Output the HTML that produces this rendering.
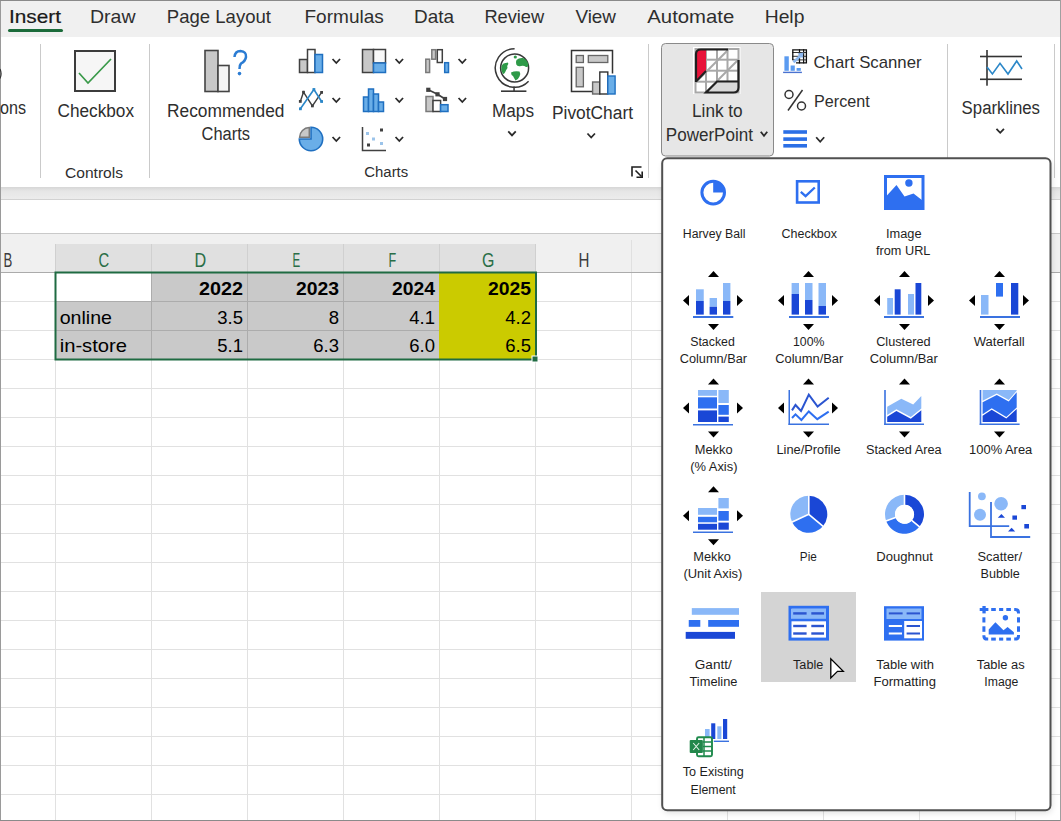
<!DOCTYPE html><html><head><meta charset="utf-8"><style>html,body{margin:0;padding:0;width:1061px;height:821px;overflow:hidden;background:#fff}svg{display:block}text{font-family:"Liberation Sans",sans-serif}</style></head><body><svg width="1061" height="821" viewBox="0 0 1061 821"><rect x="0" y="0" width="1061" height="821" fill="#ffffff"/>
<rect x="0" y="0" width="1061" height="37" fill="#f0f0f0"/>
<rect x="0" y="37" width="1061" height="150" fill="#ffffff"/>
<defs><linearGradient id="rs" x1="0" y1="0" x2="0" y2="1"><stop offset="0" stop-color="#d6d6d6"/><stop offset="0.35" stop-color="#e6e6e6"/><stop offset="1" stop-color="#ececec"/></linearGradient><filter id="psh" x="-10%" y="-10%" width="120%" height="120%"><feGaussianBlur stdDeviation="3"/></filter></defs>
<rect x="0" y="187" width="1061" height="12" fill="url(#rs)"/>
<rect x="0" y="199" width="1061" height="1" fill="#d2d2d2"/>
<rect x="0" y="200" width="1061" height="33" fill="#ffffff"/>
<rect x="0" y="233" width="1061" height="1" fill="#c9c9c9"/>
<rect x="0" y="234" width="1061" height="38" fill="#f0f0f0"/>
<rect x="55" y="244" width="481" height="28" fill="#e0e0e0"/>
<rect x="55" y="244" width="1" height="28" fill="#d0d0d0"/>
<rect x="151" y="244" width="1" height="28" fill="#d0d0d0"/>
<rect x="247" y="244" width="1" height="28" fill="#d0d0d0"/>
<rect x="343" y="244" width="1" height="28" fill="#d0d0d0"/>
<rect x="439" y="244" width="1" height="28" fill="#d0d0d0"/>
<rect x="535" y="244" width="1" height="28" fill="#d0d0d0"/>
<rect x="631" y="240" width="1" height="32" fill="#e0e0e0"/>
<rect x="727" y="240" width="1" height="32" fill="#e0e0e0"/>
<rect x="823" y="240" width="1" height="32" fill="#e0e0e0"/>
<rect x="919" y="240" width="1" height="32" fill="#e0e0e0"/>
<rect x="1015" y="240" width="1" height="32" fill="#e0e0e0"/>
<rect x="0" y="272" width="1061" height="1" fill="#ababab"/>
<rect x="0" y="301" width="1061" height="1" fill="#e1e1e1"/>
<rect x="0" y="330" width="1061" height="1" fill="#e1e1e1"/>
<rect x="0" y="359" width="1061" height="1" fill="#e1e1e1"/>
<rect x="0" y="388" width="1061" height="1" fill="#e1e1e1"/>
<rect x="0" y="417" width="1061" height="1" fill="#e1e1e1"/>
<rect x="0" y="446" width="1061" height="1" fill="#e1e1e1"/>
<rect x="0" y="475" width="1061" height="1" fill="#e1e1e1"/>
<rect x="0" y="504" width="1061" height="1" fill="#e1e1e1"/>
<rect x="0" y="533" width="1061" height="1" fill="#e1e1e1"/>
<rect x="0" y="562" width="1061" height="1" fill="#e1e1e1"/>
<rect x="0" y="591" width="1061" height="1" fill="#e1e1e1"/>
<rect x="0" y="620" width="1061" height="1" fill="#e1e1e1"/>
<rect x="0" y="649" width="1061" height="1" fill="#e1e1e1"/>
<rect x="0" y="678" width="1061" height="1" fill="#e1e1e1"/>
<rect x="0" y="707" width="1061" height="1" fill="#e1e1e1"/>
<rect x="0" y="736" width="1061" height="1" fill="#e1e1e1"/>
<rect x="0" y="765" width="1061" height="1" fill="#e1e1e1"/>
<rect x="0" y="794" width="1061" height="1" fill="#e1e1e1"/>
<rect x="55" y="273" width="1" height="548" fill="#e1e1e1"/>
<rect x="151" y="273" width="1" height="548" fill="#e1e1e1"/>
<rect x="247" y="273" width="1" height="548" fill="#e1e1e1"/>
<rect x="343" y="273" width="1" height="548" fill="#e1e1e1"/>
<rect x="439" y="273" width="1" height="548" fill="#e1e1e1"/>
<rect x="535" y="273" width="1" height="548" fill="#e1e1e1"/>
<rect x="631" y="273" width="1" height="548" fill="#e1e1e1"/>
<rect x="727" y="273" width="1" height="548" fill="#e1e1e1"/>
<rect x="823" y="273" width="1" height="548" fill="#e1e1e1"/>
<rect x="919" y="273" width="1" height="548" fill="#e1e1e1"/>
<rect x="1015" y="273" width="1" height="548" fill="#e1e1e1"/>
<rect x="151" y="273" width="288" height="28" fill="#c9c9c9"/>
<rect x="56" y="302" width="383" height="57" fill="#c9c9c9"/>
<rect x="439" y="273" width="97" height="86" fill="#cbcb00"/>
<rect x="151" y="273" width="1" height="86" fill="#acacac"/>
<rect x="247" y="273" width="1" height="86" fill="#acacac"/>
<rect x="343" y="273" width="1" height="86" fill="#acacac"/>
<rect x="56" y="301" width="383" height="1" fill="#acacac"/>
<rect x="56" y="330" width="383" height="1" fill="#acacac"/>
<rect x="56" y="273" width="95" height="28" fill="#ffffff"/>
<rect x="55.5" y="272.5" width="480.5" height="87" fill="none" stroke="#1f6b42" stroke-width="2"/>
<rect x="532" y="356" width="6" height="6" fill="#1f6b42" stroke="#ffffff" stroke-width="1"/>
<text x="3.60" y="266.80" font-size="20" fill="#3c3c3c" font-weight="normal" textLength="8.80" lengthAdjust="spacingAndGlyphs" >B</text>
<text x="98.50" y="266.80" font-size="20" fill="#2a6e47" font-weight="normal" textLength="10.70" lengthAdjust="spacingAndGlyphs" >C</text>
<text x="194.60" y="266.80" font-size="20" fill="#2a6e47" font-weight="normal" textLength="11.70" lengthAdjust="spacingAndGlyphs" >D</text>
<text x="292.40" y="266.80" font-size="20" fill="#2a6e47" font-weight="normal" textLength="7.70" lengthAdjust="spacingAndGlyphs" >E</text>
<text x="388.60" y="266.80" font-size="20" fill="#2a6e47" font-weight="normal" textLength="7.70" lengthAdjust="spacingAndGlyphs" >F</text>
<text x="481.90" y="266.80" font-size="20" fill="#2a6e47" font-weight="normal" textLength="12.40" lengthAdjust="spacingAndGlyphs" >G</text>
<text x="578.60" y="266.80" font-size="20" fill="#3c3c3c" font-weight="normal" textLength="10.90" lengthAdjust="spacingAndGlyphs" >H</text>
<text x="199.00" y="294.70" font-size="18.5" fill="#000" font-weight="bold" textLength="44.00" lengthAdjust="spacingAndGlyphs" >2022</text>
<text x="296.00" y="294.70" font-size="18.5" fill="#000" font-weight="bold" textLength="43.00" lengthAdjust="spacingAndGlyphs" >2023</text>
<text x="392.00" y="294.70" font-size="18.5" fill="#000" font-weight="bold" textLength="43.00" lengthAdjust="spacingAndGlyphs" >2024</text>
<text x="488.00" y="294.70" font-size="18.5" fill="#000" font-weight="bold" textLength="43.00" lengthAdjust="spacingAndGlyphs" >2025</text>
<text x="59.70" y="323.80" font-size="18.5" fill="#000" font-weight="normal" textLength="52.30" lengthAdjust="spacingAndGlyphs" >online</text>
<text x="59.70" y="352.40" font-size="18.5" fill="#000" font-weight="normal" textLength="67.30" lengthAdjust="spacingAndGlyphs" >in-store</text>
<text x="243" y="323.8" font-size="18.5" fill="#000" text-anchor="end">3.5</text>
<text x="243" y="352.4" font-size="18.5" fill="#000" text-anchor="end">5.1</text>
<text x="339" y="323.8" font-size="18.5" fill="#000" text-anchor="end">8</text>
<text x="339" y="352.4" font-size="18.5" fill="#000" text-anchor="end">6.3</text>
<text x="435" y="323.8" font-size="18.5" fill="#000" text-anchor="end">4.1</text>
<text x="435" y="352.4" font-size="18.5" fill="#000" text-anchor="end">6.0</text>
<text x="531" y="323.8" font-size="18.5" fill="#000" text-anchor="end">4.2</text>
<text x="531" y="352.4" font-size="18.5" fill="#000" text-anchor="end">6.5</text>
<rect x="0" y="0" width="1" height="821" fill="#9a9a9a"/>
<rect x="0" y="0" width="1061" height="1" fill="#8a8a8a"/>
<rect x="0" y="820" width="1061" height="1" fill="#8a8a8a"/>
<rect x="1060" y="0" width="1" height="821" fill="#a0a0a0"/>
<text x="9.00" y="23.00" font-size="19" fill="#1a1a1a" font-weight="normal" textLength="52.00" lengthAdjust="spacingAndGlyphs" stroke="#1a1a1a" stroke-width="0.2">Insert</text>
<text x="90.00" y="23.00" font-size="19" fill="#2e2e2e" font-weight="normal" textLength="45.50" lengthAdjust="spacingAndGlyphs" >Draw</text>
<text x="166.80" y="23.00" font-size="19" fill="#2e2e2e" font-weight="normal" textLength="104.20" lengthAdjust="spacingAndGlyphs" >Page Layout</text>
<text x="304.50" y="23.00" font-size="19" fill="#2e2e2e" font-weight="normal" textLength="79.30" lengthAdjust="spacingAndGlyphs" >Formulas</text>
<text x="414.00" y="23.00" font-size="19" fill="#2e2e2e" font-weight="normal" textLength="40.00" lengthAdjust="spacingAndGlyphs" >Data</text>
<text x="484.40" y="23.00" font-size="19" fill="#2e2e2e" font-weight="normal" textLength="59.80" lengthAdjust="spacingAndGlyphs" >Review</text>
<text x="575.40" y="23.00" font-size="19" fill="#2e2e2e" font-weight="normal" textLength="40.60" lengthAdjust="spacingAndGlyphs" >View</text>
<text x="647.30" y="23.00" font-size="19" fill="#2e2e2e" font-weight="normal" textLength="86.90" lengthAdjust="spacingAndGlyphs" >Automate</text>
<text x="764.70" y="23.00" font-size="19" fill="#2e2e2e" font-weight="normal" textLength="39.70" lengthAdjust="spacingAndGlyphs" >Help</text>
<rect x="8" y="29" width="55" height="3" rx="1.5" fill="#1b6b3a"/>
<rect x="40" y="44" width="1" height="134" fill="#cacaca"/>
<rect x="149" y="44" width="1" height="134" fill="#cacaca"/>
<rect x="648" y="44" width="1" height="134" fill="#cacaca"/>
<rect x="947" y="44" width="1" height="134" fill="#cacaca"/>
<rect x="1054" y="44" width="1" height="134" fill="#cacaca"/>
<text x="0.00" y="113.60" font-size="18" fill="#2e2e2e" font-weight="normal" textLength="26.00" lengthAdjust="spacingAndGlyphs" >ons</text>
<path d="M0,69 Q2.2,73.7 0,78.4" fill="none" stroke="#333" stroke-width="1.2"/>
<rect x="75" y="51" width="40" height="40" fill="#f6f6f6" stroke="#3c3c3c" stroke-width="2"/>
<polyline points="79,73 88,83 111,59" fill="none" stroke="#3a9a4a" stroke-width="1.7"/>
<text x="57.50" y="117.00" font-size="18" fill="#2e2e2e" font-weight="normal" textLength="76.50" lengthAdjust="spacingAndGlyphs" >Checkbox</text>
<text x="65.00" y="177.50" font-size="15.5" fill="#2e2e2e" font-weight="normal" textLength="58.00" lengthAdjust="spacingAndGlyphs" >Controls</text>
<rect x="205" y="50.5" width="13" height="41" fill="#c8c8c8" stroke="#444" stroke-width="1.6"/>
<rect x="218" y="65.5" width="11" height="26" fill="#f4f4f4" stroke="#444" stroke-width="1.6"/>
<path d="M234.5,57 Q235,51 240.5,51 Q246.5,51.5 246,57 Q245.5,61 241,63.5 Q239.5,65 239.5,69" fill="none" stroke="#2b7cd3" stroke-width="2.5"/>
<circle cx="239.5" cy="73.6" r="1.8" fill="#2b7cd3"/>
<text x="167.00" y="116.50" font-size="18" fill="#2e2e2e" font-weight="normal" textLength="117.50" lengthAdjust="spacingAndGlyphs" >Recommended</text>
<text x="201.60" y="140.00" font-size="18" fill="#2e2e2e" font-weight="normal" textLength="48.40" lengthAdjust="spacingAndGlyphs" >Charts</text>
<rect x="299.5" y="59.5" width="8" height="13" fill="#c8c8c8" stroke="#404040" stroke-width="1.5"/>
<rect x="307.5" y="49.5" width="7.5" height="23" fill="#fff" stroke="#404040" stroke-width="1.5"/>
<rect x="315" y="54.5" width="7.5" height="18" fill="#6aaee8" stroke="#1f6fc0" stroke-width="1.5"/>
<polyline points="332.55,59.00 336.30,63.00 340.05,59.00" fill="none" stroke="#2a2a2a" stroke-width="1.8"/>
<rect x="362.5" y="49.5" width="11" height="23" fill="#c8c8c8" stroke="#404040" stroke-width="1.5"/>
<rect x="373.5" y="49.5" width="12" height="13.5" fill="#f8f8f8" stroke="#404040" stroke-width="1.5"/>
<rect x="373.5" y="63" width="12" height="9.5" fill="#6aaee8" stroke="#1f6fc0" stroke-width="1.5"/>
<polyline points="395.55,59.00 399.30,63.00 403.05,59.00" fill="none" stroke="#2a2a2a" stroke-width="1.8"/>
<rect x="425.8" y="59.2" width="3.8" height="13.3" fill="#c8c8c8" stroke="#7a7a7a" stroke-width="1.5"/>
<rect x="431.8" y="49.7" width="3.8" height="9.5" fill="#c8c8c8" stroke="#7a7a7a" stroke-width="1.5"/>
<rect x="437.3" y="49.7" width="5" height="12.8" fill="#fff" stroke="#404040" stroke-width="1.5"/>
<rect x="444.7" y="62.7" width="3.8" height="9.8" fill="#6aaee8" stroke="#1f6fc0" stroke-width="1.5"/>
<polyline points="458.55,59.00 462.30,63.00 466.05,59.00" fill="none" stroke="#2a2a2a" stroke-width="1.8"/>
<polyline points="300.3,101.4 303.5,92.2 312.4,105.9 321.6,92.4" fill="none" stroke="#404040" stroke-width="1.4"/>
<rect x="298.90000000000003" y="100.0" width="2.8" height="2.8" fill="#404040"/>
<rect x="302.1" y="90.8" width="2.8" height="2.8" fill="#404040"/>
<rect x="311.0" y="104.5" width="2.8" height="2.8" fill="#404040"/>
<rect x="320.20000000000005" y="91.0" width="2.8" height="2.8" fill="#404040"/>
<polyline points="300.4,108.8 313.9,89.5 321.6,101.5" fill="none" stroke="#2b87c8" stroke-width="1.6"/>
<rect x="299.0" y="107.39999999999999" width="2.8" height="2.8" fill="#2b87c8"/>
<rect x="312.5" y="88.1" width="2.8" height="2.8" fill="#2b87c8"/>
<rect x="320.20000000000005" y="100.1" width="2.8" height="2.8" fill="#2b87c8"/>
<polyline points="332.55,98.00 336.30,102.00 340.05,98.00" fill="none" stroke="#2a2a2a" stroke-width="1.8"/>
<rect x="363.5" y="97" width="5" height="14.5" fill="#6aaee8" stroke="#1f6fc0" stroke-width="1.5"/>
<rect x="368.5" y="89" width="5" height="22.5" fill="#6aaee8" stroke="#1f6fc0" stroke-width="1.5"/>
<rect x="373.5" y="94" width="5" height="17.5" fill="#6aaee8" stroke="#1f6fc0" stroke-width="1.5"/>
<rect x="378.5" y="102" width="5" height="9.5" fill="#6aaee8" stroke="#1f6fc0" stroke-width="1.5"/>
<polyline points="395.55,98.00 399.30,102.00 403.05,98.00" fill="none" stroke="#2a2a2a" stroke-width="1.8"/>
<rect x="426" y="96.5" width="7" height="15" fill="#c8c8c8" stroke="#7a7a7a" stroke-width="1.5"/>
<rect x="433" y="100.5" width="7.6" height="11" fill="#fff" stroke="#404040" stroke-width="1.5"/>
<rect x="440.6" y="104.7" width="7.4" height="6.8" fill="#6aaee8" stroke="#1f6fc0" stroke-width="1.5"/>
<polyline points="428.3,89.8 437.5,94.3 445,99" fill="none" stroke="#404040" stroke-width="1.7"/>
<rect x="426.2" y="87.7" width="4.2" height="4.2" fill="#404040"/>
<rect x="435.4" y="92.2" width="4.2" height="4.2" fill="#404040"/>
<rect x="442.9" y="96.9" width="4.2" height="4.2" fill="#404040"/>
<polyline points="458.55,98.00 462.30,102.00 466.05,98.00" fill="none" stroke="#2a2a2a" stroke-width="1.8"/>
<path d="M311,139 L311,127.3 A11.7,11.7 0 1 1 299.3,139 Z" fill="#6aaee8" stroke="#1f6fc0" stroke-width="1.6"/>
<path d="M309.3,137.3 L299.6,137.3 A9.7,9.7 0 0 1 309.3,127.6 Z" fill="#c8c8c8" stroke="#7a7a7a" stroke-width="1.5"/>
<polyline points="332.55,137.00 336.30,141.00 340.05,137.00" fill="none" stroke="#2a2a2a" stroke-width="1.8"/>
<polyline points="362.5,127 362.5,150.5 386,150.5" fill="none" stroke="#404040" stroke-width="1.5"/>
<rect x="366.0" y="132.0" width="3" height="3" fill="#9cc4ea"/>
<rect x="372.0" y="137.5" width="3" height="3" fill="#9cc4ea"/>
<rect x="380.0" y="142.0" width="3" height="3" fill="#9cc4ea"/>
<rect x="367.0" y="143.5" width="3" height="3" fill="#404040"/>
<rect x="380.0" y="128.5" width="3" height="3" fill="#404040"/>
<polyline points="395.55,137.00 399.30,141.00 403.05,137.00" fill="none" stroke="#2a2a2a" stroke-width="1.8"/>
<text x="364.30" y="177.00" font-size="15.5" fill="#2e2e2e" font-weight="normal" textLength="43.90" lengthAdjust="spacingAndGlyphs" >Charts</text>
<circle cx="514.6" cy="68" r="14" fill="#ffffff" stroke="#383838" stroke-width="1.5"/>
<path d="M501.5,66 Q503,62.5 506,63 Q508.5,61.5 508.3,64 Q506.5,66 507.5,68 Q506,70 505,72.5 Q503.5,75 502.5,73 Q500.5,70 501.5,66Z" fill="#2e9a48"/>
<path d="M516.5,60 Q519,57.5 523,58 Q527,59.5 528.3,64 Q528.5,67.5 526,67 Q523.5,65 521,66 Q517.5,67 516.3,64.5 Q515.5,62 516.5,60Z" fill="#2e9a48"/>
<circle cx="515.3" cy="57" r="1.6" fill="#2e9a48"/>
<path d="M511,72.5 Q515,70.5 519.5,71.5 Q521,73.5 519.5,76.5 Q518,80 515.5,80.5 Q514,78 513,76 Q511,75 511,72.5Z" fill="#2e9a48"/>
<path d="M514.6,48.7 A19.3,19.3 0 1 0 528.6,81.3" fill="none" stroke="#383838" stroke-width="1.5"/>
<rect x="513.3" y="86.5" width="1.5" height="4.5" fill="#383838"/>
<rect x="501" y="90.4" width="25.4" height="1.6" fill="#383838"/>
<text x="492.00" y="116.50" font-size="18" fill="#2e2e2e" font-weight="normal" textLength="42.00" lengthAdjust="spacingAndGlyphs" >Maps</text>
<polyline points="508.25,131.40 512.00,135.40 515.75,131.40" fill="none" stroke="#2a2a2a" stroke-width="1.8"/>
<path d="M592,91.5 L571.5,91.5 L571.5,50.5 L612.5,50.5 L612.5,73.5" fill="none" stroke="#333" stroke-width="1.5"/>
<rect x="576.2" y="55.5" width="7.2" height="7" fill="#c8c8c8" stroke="#666" stroke-width="1.3"/>
<rect x="588.3" y="55.5" width="19.5" height="7" fill="#c8c8c8" stroke="#666" stroke-width="1.3"/>
<rect x="576.2" y="67.3" width="7.2" height="19.5" fill="#c8c8c8" stroke="#666" stroke-width="1.3"/>
<rect x="592.6" y="82" width="7.2" height="12" fill="#c8c8c8" stroke="#666" stroke-width="1.4"/>
<rect x="599.8" y="72" width="8" height="22" fill="#fff" stroke="#333" stroke-width="1.4"/>
<rect x="607.8" y="76" width="7.3" height="18" fill="#6aaee8" stroke="#1f6fc0" stroke-width="1.4"/>
<text x="552.00" y="118.80" font-size="18" fill="#2e2e2e" font-weight="normal" textLength="81.00" lengthAdjust="spacingAndGlyphs" >PivotChart</text>
<polyline points="587.45,133.50 591.20,137.50 594.95,133.50" fill="none" stroke="#2a2a2a" stroke-width="1.8"/>
<polyline points="632,176.5 632,167 641.5,167" fill="none" stroke="#1e1e1e" stroke-width="1.6"/>
<line x1="635.5" y1="170.5" x2="641.5" y2="176.5" stroke="#1e1e1e" stroke-width="1.6"/>
<polyline points="642.2,171.5 642.2,177.2 636.5,177.2" fill="none" stroke="#1e1e1e" stroke-width="1.6"/>
<rect x="661.5" y="43.5" width="112" height="112.5" rx="4" fill="#e6e6e6" stroke="#8a8a8a" stroke-width="1"/>
<rect x="693" y="47" width="47.5" height="47" fill="#ffffff"/>
<rect x="705" y="49" width="2" height="43.5" fill="#a8a8a8"/>
<rect x="716" y="49" width="2" height="43.5" fill="#a8a8a8"/>
<rect x="726.5" y="49" width="2" height="43.5" fill="#a8a8a8"/>
<rect x="695" y="58.7" width="43.5" height="2" fill="#a8a8a8"/>
<rect x="695" y="69.7" width="43.5" height="2" fill="#a8a8a8"/>
<rect x="695" y="80.7" width="43.5" height="2" fill="#a8a8a8"/>
<path d="M695.5,49 L738.5,49 L738.5,92.5 L695.5,92.5 Z" fill="none" stroke="#a8a8a8" stroke-width="2"/>
<line x1="697" y1="81" x2="728" y2="50" stroke="#a8a8a8" stroke-width="2"/>
<line x1="717" y1="81" x2="738" y2="60" stroke="#a8a8a8" stroke-width="2"/>
<path d="M717,81.5 L738.5,81.5 L738.5,88 Q738.5,92.5 734,92.5 L706,92.5 Z" fill="#d9d9d9"/>
<path d="M696,81 L696,54 Q696,49.5 700.5,49.5 L706,49.5 L706,70.5 Z" fill="#e8133a"/>
<path d="M696,82 L696,54 Q696,49.5 701,49.5 L728,49.5" fill="none" stroke="#202020" stroke-width="2.2"/>
<line x1="696" y1="81.5" x2="706" y2="71" stroke="#202020" stroke-width="2"/>
<path d="M738.5,60 L738.5,87.5 Q738.5,92.5 733.5,92.5 L706,92.5 L717,81.5 L738.5,81.5" fill="none" stroke="#202020" stroke-width="2.2"/>
<text x="692.00" y="116.80" font-size="18" fill="#2e2e2e" font-weight="normal" textLength="50.70" lengthAdjust="spacingAndGlyphs" >Link to</text>
<text x="665.80" y="140.60" font-size="18" fill="#2e2e2e" font-weight="normal" textLength="87.20" lengthAdjust="spacingAndGlyphs" >PowerPoint</text>
<polyline points="760.75,131.80 764.00,135.80 767.25,131.80" fill="none" stroke="#2a2a2a" stroke-width="1.8"/>
<rect x="784.4" y="56.3" width="4.4" height="14.5" fill="#5b9bf0"/>
<rect x="790.6" y="65.5" width="4.2" height="5.3" fill="#5b9bf0"/>
<rect x="796.6" y="68" width="4.2" height="2.8" fill="#5b9bf0"/>
<rect x="783.1" y="71.7" width="18.8" height="1.4" fill="#4a72d0"/>
<rect x="793" y="50" width="13.2" height="12.8" fill="#fff"/>
<rect x="798.9" y="49.2" width="1.2" height="14.2" fill="#111"/>
<rect x="803.0" y="49.2" width="1.2" height="14.2" fill="#111"/>
<rect x="792.2" y="52.0" width="14.7" height="1" fill="#333"/>
<rect x="792.2" y="55.8" width="14.7" height="1" fill="#333"/>
<rect x="792.2" y="59.4" width="14.7" height="1" fill="#333"/>
<path d="M792.8,60 L792.8,49.8 L806.4,49.8 L806.4,62.9 L796,62.9" fill="none" stroke="#111" stroke-width="1.3"/>
<line x1="793.5" y1="62.3" x2="801" y2="55.3" stroke="#8cb8f0" stroke-width="2.6"/>
<polygon points="797.5,53.5 803.5,52.5 802.5,58.5" fill="#8cb8f0"/>
<text x="813.50" y="68.00" font-size="17" fill="#2e2e2e" font-weight="normal" textLength="108.10" lengthAdjust="spacingAndGlyphs" >Chart Scanner</text>
<circle cx="789" cy="94.5" r="4" fill="none" stroke="#333" stroke-width="1.5"/>
<circle cx="801.5" cy="106" r="4" fill="none" stroke="#333" stroke-width="1.5"/>
<line x1="802.5" y1="90" x2="788" y2="110.5" stroke="#333" stroke-width="1.5"/>
<text x="814.00" y="106.70" font-size="17" fill="#2e2e2e" font-weight="normal" textLength="55.70" lengthAdjust="spacingAndGlyphs" >Percent</text>
<rect x="783.3" y="130.2" width="23.7" height="3.6" fill="#2b6fe6"/>
<rect x="783.3" y="137.3" width="23.7" height="3.6" fill="#2b6fe6"/>
<rect x="783.3" y="144" width="23.7" height="3.6" fill="#2b6fe6"/>
<polyline points="816.20,137.25 820.20,141.75 824.20,137.25" fill="none" stroke="#2a2a2a" stroke-width="1.8"/>
<rect x="986.2" y="50" width="1.6" height="35.7" fill="#333"/>
<rect x="980" y="55.7" width="42" height="1.6" fill="#333"/>
<rect x="980" y="78.5" width="42" height="1.6" fill="#333"/>
<polyline points="987,67 992.4,74 1000,63.3 1008,74 1016.7,61 1022,69" fill="none" stroke="#2b87c8" stroke-width="1.6"/>
<text x="961.60" y="114.00" font-size="18" fill="#2e2e2e" font-weight="normal" textLength="78.40" lengthAdjust="spacingAndGlyphs" >Sparklines</text>
<polyline points="996.45,128.80 1000.20,132.80 1003.95,128.80" fill="none" stroke="#2a2a2a" stroke-width="1.8"/>
<rect x="663" y="161" width="389" height="652" rx="6" fill="#000" opacity="0.12" filter="url(#psh)"/>
<rect x="662.2" y="158.2" width="388.3" height="652" rx="5" fill="#ffffff" stroke="#505050" stroke-width="2"/>
<rect x="761.00" y="592.00" width="95.00" height="90.00" fill="#d4d4d4"/>
<circle cx="713.2" cy="192.6" r="11.3" fill="none" stroke="#2e6ff0" stroke-width="3"/>
<path d="M713.2,192.6 L713.2,181.3 A11.3,11.3 0 0 1 724.5,192.6 Z" fill="#2e6ff0"/>
<rect x="797.1" y="181.3" width="21.6" height="21.2" fill="none" stroke="#2e6ff0" stroke-width="2.6"/>
<polyline points="800.8,191.8 805.6,196.2 814.8,187.5" fill="none" stroke="#2e6ff0" stroke-width="2.3"/>
<rect x="885.5" y="176.5" width="37.5" height="32" fill="none" stroke="#2e6ff0" stroke-width="3"/>
<polygon points="886,196.6 896.5,185 904.5,196.5 913.5,193.5 922.5,200.5 922.5,208 886,208" fill="#2e6ff0"/>
<circle cx="908.9" cy="183" r="3.7" fill="#2e6ff0"/>
<polygon points="708.0,277.0 713.5,271.0 719.0,277.0" fill="#000"/>
<polygon points="708.0,324.0 713.5,330.0 719.0,324.0" fill="#000"/>
<polygon points="689.0,295.0 683.0,300.5 689.0,306.0" fill="#000"/>
<polygon points="737.0,295.0 743.0,300.5 737.0,306.0" fill="#000"/>
<polygon points="803.0,277.0 808.5,271.0 814.0,277.0" fill="#000"/>
<polygon points="803.0,324.0 808.5,330.0 814.0,324.0" fill="#000"/>
<polygon points="784.0,295.0 778.0,300.5 784.0,306.0" fill="#000"/>
<polygon points="832.0,295.0 838.0,300.5 832.0,306.0" fill="#000"/>
<polygon points="899.0,277.0 904.5,271.0 910.0,277.0" fill="#000"/>
<polygon points="899.0,324.0 904.5,330.0 910.0,324.0" fill="#000"/>
<polygon points="880.0,295.0 874.0,300.5 880.0,306.0" fill="#000"/>
<polygon points="928.0,295.0 934.0,300.5 928.0,306.0" fill="#000"/>
<polygon points="994.0,277.0 999.5,271.0 1005.0,277.0" fill="#000"/>
<polygon points="994.0,324.0 999.5,330.0 1005.0,324.0" fill="#000"/>
<polygon points="975.0,295.0 969.0,300.5 975.0,306.0" fill="#000"/>
<polygon points="1023.0,295.0 1029.0,300.5 1023.0,306.0" fill="#000"/>
<rect x="696.00" y="289.30" width="7.75" height="11.70" fill="#8ab8f8"/>
<rect x="696.00" y="301.00" width="7.75" height="13.60" fill="#1a47d6"/>
<rect x="709.60" y="298.00" width="7.40" height="8.80" fill="#8ab8f8"/>
<rect x="709.60" y="306.80" width="7.40" height="7.80" fill="#1a47d6"/>
<rect x="723.00" y="283.00" width="7.40" height="18.00" fill="#8ab8f8"/>
<rect x="723.00" y="301.00" width="7.40" height="13.60" fill="#1a47d6"/>
<rect x="693.00" y="316.00" width="40.30" height="2.00" fill="#3a72e0"/>
<rect x="791.60" y="283.00" width="7.40" height="11.00" fill="#8ab8f8"/>
<rect x="791.60" y="294.00" width="7.40" height="20.60" fill="#1a47d6"/>
<rect x="805.00" y="283.00" width="7.50" height="17.00" fill="#8ab8f8"/>
<rect x="805.00" y="300.00" width="7.50" height="14.60" fill="#1a47d6"/>
<rect x="818.50" y="283.00" width="7.50" height="23.00" fill="#8ab8f8"/>
<rect x="818.50" y="306.00" width="7.50" height="8.60" fill="#1a47d6"/>
<rect x="789.00" y="316.00" width="40.00" height="2.00" fill="#3a72e0"/>
<rect x="887.20" y="298.00" width="5.80" height="16.60" fill="#8ab8f8"/>
<rect x="894.70" y="289.30" width="5.90" height="25.30" fill="#1a47d6"/>
<rect x="908.00" y="294.00" width="6.00" height="20.60" fill="#8ab8f8"/>
<rect x="915.50" y="283.00" width="5.80" height="31.60" fill="#1a47d6"/>
<rect x="884.00" y="316.00" width="40.00" height="2.00" fill="#3a72e0"/>
<rect x="981.00" y="295.00" width="7.50" height="19.60" fill="#8ab8f8"/>
<rect x="996.00" y="283.00" width="7.00" height="13.60" fill="#2e6ff0"/>
<rect x="1011.00" y="283.00" width="7.30" height="31.60" fill="#1a47d6"/>
<rect x="980.00" y="316.00" width="40.00" height="2.00" fill="#3a72e0"/>
<polygon points="708.0,384.4 713.5,378.4 719.0,384.4" fill="#000"/>
<polygon points="708.0,431.4 713.5,437.4 719.0,431.4" fill="#000"/>
<polygon points="689.0,402.4 683.0,407.9 689.0,413.4" fill="#000"/>
<polygon points="737.0,402.4 743.0,407.9 737.0,413.4" fill="#000"/>
<polygon points="803.0,384.4 808.5,378.4 814.0,384.4" fill="#000"/>
<polygon points="803.0,431.4 808.5,437.4 814.0,431.4" fill="#000"/>
<polygon points="784.0,402.4 778.0,407.9 784.0,413.4" fill="#000"/>
<polygon points="832.0,402.4 838.0,407.9 832.0,413.4" fill="#000"/>
<polygon points="899.0,384.4 904.5,378.4 910.0,384.4" fill="#000"/>
<polygon points="899.0,431.4 904.5,437.4 910.0,431.4" fill="#000"/>
<polygon points="994.0,384.4 999.5,378.4 1005.0,384.4" fill="#000"/>
<polygon points="994.0,431.4 999.5,437.4 1005.0,431.4" fill="#000"/>
<rect x="698.00" y="390.00" width="19.00" height="5.80" fill="#8ab8f8"/>
<rect x="698.00" y="397.30" width="19.00" height="11.20" fill="#2e6ff0"/>
<rect x="698.00" y="410.40" width="19.00" height="11.60" fill="#1a47d6"/>
<rect x="718.40" y="390.00" width="10.40" height="13.00" fill="#8ab8f8"/>
<rect x="718.40" y="405.00" width="10.40" height="9.80" fill="#2e6ff0"/>
<rect x="718.40" y="416.60" width="10.40" height="5.40" fill="#1a47d6"/>
<rect x="693.00" y="424.00" width="40.00" height="1.50" fill="#3a72e0"/>
<rect x="788.50" y="390.00" width="1.50" height="35.00" fill="#3a72e0"/>
<rect x="788.50" y="423.50" width="40.50" height="1.50" fill="#3a72e0"/>
<polyline points="792,410.4 795.5,405 801,411 808.8,394.6 817.6,406.5 828.7,397.8" fill="none" stroke="#2b55d0" stroke-width="2"/>
<polyline points="792,418 795.5,414.3 801.4,420 808.8,411.4 817.3,419.2 828.7,411.7" fill="none" stroke="#2e6ff0" stroke-width="2"/>
<rect x="884.20" y="390.00" width="1.60" height="35.00" fill="#3a72e0"/>
<rect x="884.20" y="423.50" width="39.80" height="1.50" fill="#3a72e0"/>
<polygon points="887.2,406.8 901.3,398.8 913.2,404.6 921.3,396 921.3,408.5 910.8,417 896.4,409.3 887.2,415" fill="#8ab8f8"/>
<polygon points="887.2,416.8 896.4,411 910.8,418.7 921.3,410.2 921.3,421.9 887.2,421.9" fill="#1a47d6"/>
<rect x="979.70" y="390.00" width="1.60" height="35.00" fill="#3a72e0"/>
<rect x="979.70" y="423.50" width="39.90" height="1.50" fill="#3a72e0"/>
<polygon points="982.6,390 1016.7,390 1016.7,390.7 1008.7,399.9 996.8,393.4 982.6,400.7" fill="#8ab8f8"/>
<polygon points="982.6,402.2 996.8,394.9 1008.7,401.4 1016.7,392.2 1016.7,407.5 1006.3,417 991.7,408.3 982.6,414.3" fill="#2e6ff0"/>
<polygon points="982.6,415.8 991.7,409.8 1006.3,418.5 1016.7,409 1016.7,422 982.6,422" fill="#1a47d6"/>
<polygon points="708.0,492.20000000000005 713.5,486.20000000000005 719.0,492.20000000000005" fill="#000"/>
<polygon points="708.0,539.2 713.5,545.2 719.0,539.2" fill="#000"/>
<polygon points="689.0,510.20000000000005 683.0,515.7 689.0,521.2" fill="#000"/>
<polygon points="737.0,510.20000000000005 743.0,515.7 737.0,521.2" fill="#000"/>
<rect x="698.00" y="508.00" width="19.00" height="6.80" fill="#8ab8f8"/>
<rect x="698.00" y="516.80" width="19.00" height="5.50" fill="#2e6ff0"/>
<rect x="698.00" y="523.80" width="19.00" height="5.90" fill="#1a47d6"/>
<rect x="718.40" y="498.00" width="10.40" height="10.40" fill="#8ab8f8"/>
<rect x="718.40" y="511.00" width="10.40" height="9.70" fill="#2e6ff0"/>
<rect x="718.40" y="522.60" width="10.40" height="7.10" fill="#1a47d6"/>
<rect x="693.00" y="531.50" width="40.00" height="1.50" fill="#3a72e0"/>
<path d="M808.8,514.3 L808.80,495.80 A18.5,18.5 0 0 1 822.97,526.19 Z" fill="#1a47d6"/>
<path d="M808.8,514.3 L822.97,526.19 A18.5,18.5 0 0 1 792.03,522.12 Z" fill="#2e6ff0"/>
<path d="M808.8,514.3 L792.03,522.12 A18.5,18.5 0 0 1 808.80,495.80 Z" fill="#8ab8f8"/>
<line x1="808.8" y1="514.3" x2="808.80" y2="494.80" stroke="#fff" stroke-width="1.6"/>
<line x1="808.8" y1="514.3" x2="823.74" y2="526.83" stroke="#fff" stroke-width="1.6"/>
<line x1="808.8" y1="514.3" x2="791.13" y2="522.54" stroke="#fff" stroke-width="1.6"/>
<path d="M904.50,504.80 L904.50,494.80 A19.5,19.5 0 0 1 919.44,526.83 L911.78,520.41 A9.5,9.5 0 0 0 904.50,504.80 Z" fill="#1a47d6"/>
<path d="M911.78,520.41 L919.44,526.83 A19.5,19.5 0 0 1 886.18,520.97 L895.57,517.55 A9.5,9.5 0 0 0 911.78,520.41 Z" fill="#2e6ff0"/>
<path d="M895.57,517.55 L886.18,520.97 A19.5,19.5 0 0 1 904.50,494.80 L904.50,504.80 A9.5,9.5 0 0 0 895.57,517.55 Z" fill="#8ab8f8"/>
<line x1="904.5" y1="514.3" x2="904.50" y2="493.80" stroke="#fff" stroke-width="1.6"/>
<line x1="904.5" y1="514.3" x2="920.20" y2="527.48" stroke="#fff" stroke-width="1.6"/>
<line x1="904.5" y1="514.3" x2="885.24" y2="521.31" stroke="#fff" stroke-width="1.6"/>
<circle cx="904.5" cy="514.3" r="9.5" fill="#fff"/>
<polyline points="969.7,492 969.7,526.2 1009.2,526.2" fill="none" stroke="#3a72e0" stroke-width="1.8"/>
<polyline points="991,501.9 991,537 1030.2,537" fill="none" stroke="#3a72e0" stroke-width="1.8"/>
<circle cx="981.9" cy="496.3" r="3.9" fill="#8ab8f8"/>
<circle cx="980" cy="514.8" r="6" fill="#8ab8f8"/>
<circle cx="1001.1" cy="503.8" r="6.8" fill="#8ab8f8"/>
<polygon points="997.8,517.8 1001.4,514 1005,517.8" fill="#1a47d6"/>
<polygon points="1008,531.6 1011.6,527.8 1015.2,531.6" fill="#1a47d6"/>
<rect x="1021.40" y="505.00" width="4.60" height="4.20" fill="#1a47d6"/>
<rect x="1012.40" y="515.50" width="4.60" height="4.20" fill="#1a47d6"/>
<rect x="1024.30" y="524.00" width="4.70" height="4.50" fill="#1a47d6"/>
<rect x="691.80" y="608.10" width="47.20" height="6.70" fill="#8ab8f8"/>
<rect x="688.75" y="620.00" width="11.55" height="6.80" fill="#2e6ff0"/>
<rect x="708.20" y="620.00" width="30.80" height="6.80" fill="#2e6ff0"/>
<rect x="685.70" y="631.90" width="49.30" height="6.90" fill="#1a47d6"/>
<rect x="790" y="607.3" width="37.5" height="31.8" fill="#fff" stroke="#2e6ff0" stroke-width="3"/>
<rect x="791.50" y="608.80" width="34.50" height="10.20" fill="#8ab8f8"/>
<rect x="790.00" y="618.80" width="37.50" height="2.50" fill="#2e6ff0"/>
<rect x="793.20" y="612.20" width="13.40" height="2.40" fill="#2b55d0"/>
<rect x="811.30" y="612.20" width="12.70" height="2.40" fill="#2b55d0"/>
<rect x="793.20" y="624.80" width="13.40" height="2.40" fill="#2b55d0"/>
<rect x="811.30" y="624.80" width="12.70" height="2.40" fill="#2b55d0"/>
<rect x="793.20" y="632.30" width="13.40" height="2.40" fill="#2b55d0"/>
<rect x="811.30" y="632.30" width="12.70" height="2.40" fill="#2b55d0"/>
<rect x="884.00" y="606.20" width="40.00" height="34.40" fill="#2e6ff0"/>
<rect x="886.50" y="608.50" width="35.00" height="10.50" fill="#8ab8f8"/>
<rect x="904.20" y="621.00" width="17.80" height="17.30" fill="#ffffff"/>
<rect x="888.80" y="612.40" width="13.80" height="2.00" fill="#2b55d0"/>
<rect x="906.60" y="612.40" width="13.40" height="2.00" fill="#2b55d0"/>
<rect x="888.80" y="625.00" width="13.20" height="2.00" fill="#ffffff"/>
<rect x="906.60" y="625.00" width="13.40" height="2.00" fill="#2b55d0"/>
<rect x="888.80" y="632.50" width="13.20" height="2.00" fill="#ffffff"/>
<rect x="906.60" y="632.50" width="13.40" height="2.00" fill="#2b55d0"/>
<rect x="979.70" y="608.00" width="8.70" height="3.00" fill="#2e6ff0"/>
<rect x="982.40" y="606.00" width="3.30" height="7.40" fill="#2e6ff0"/>
<rect x="991.20" y="608.00" width="4.60" height="3.00" fill="#2e6ff0"/>
<rect x="991.20" y="637.60" width="4.60" height="3.00" fill="#2e6ff0"/>
<rect x="999.10" y="608.00" width="4.10" height="3.00" fill="#2e6ff0"/>
<rect x="999.10" y="637.60" width="4.10" height="3.00" fill="#2e6ff0"/>
<rect x="1006.30" y="608.00" width="4.60" height="3.00" fill="#2e6ff0"/>
<rect x="1006.30" y="637.60" width="4.60" height="3.00" fill="#2e6ff0"/>
<rect x="982.40" y="617.30" width="3.00" height="5.20" fill="#2e6ff0"/>
<rect x="1017.00" y="617.30" width="3.00" height="5.20" fill="#2e6ff0"/>
<rect x="982.40" y="626.30" width="3.00" height="5.50" fill="#2e6ff0"/>
<rect x="1017.00" y="626.30" width="3.00" height="5.50" fill="#2e6ff0"/>
<path d="M1014.2,609.5 L1015.3,609.5 Q1018.5,609.5 1018.5,612.7 L1018.5,613.6" fill="none" stroke="#2e6ff0" stroke-width="3"/>
<path d="M1018.5,635.1 L1018.5,635.9 Q1018.5,639.1 1015.3,639.1 L1014.2,639.1" fill="none" stroke="#2e6ff0" stroke-width="3"/>
<path d="M988.2,639.1 L987.1,639.1 Q983.9,639.1 983.9,635.9 L983.9,635.2" fill="none" stroke="#2e6ff0" stroke-width="3"/>
<polygon points="988.7,634.5 988.7,629.6 995.4,622.2 1003.5,630.2 1007.6,627.1 1013.9,632.3 1013.9,634.5" fill="#2e6ff0"/>
<circle cx="1005.4" cy="617.8" r="2.7" fill="#2e6ff0"/>
<rect x="705.00" y="729.00" width="4.60" height="10.00" fill="#8ab8f8"/>
<rect x="711.20" y="723.30" width="4.10" height="15.70" fill="#1a47d6"/>
<rect x="717.30" y="726.30" width="4.10" height="12.70" fill="#8ab8f8"/>
<rect x="723.00" y="719.00" width="4.20" height="20.00" fill="#1a47d6"/>
<rect x="713.80" y="740.60" width="15.20" height="1.40" fill="#3a72e0"/>
<rect x="697" y="737.2" width="15" height="19" rx="1.5" fill="#fff" stroke="#1f8a4c" stroke-width="1.9"/>
<line x1="703" y1="742" x2="712" y2="742" stroke="#1f8a4c" stroke-width="1.5"/>
<line x1="703" y1="746.5" x2="712" y2="746.5" stroke="#1f8a4c" stroke-width="1.5"/>
<line x1="703" y1="751" x2="712" y2="751" stroke="#1f8a4c" stroke-width="1.5"/>
<line x1="704" y1="737.5" x2="704" y2="756" stroke="#1f8a4c" stroke-width="1.5"/>
<rect x="689.7" y="740" width="13.2" height="13" rx="1" fill="#22874b"/>
<path d="M693.2,743 L699.2,750 M699.2,743 L693.2,750" stroke="#e8f5ec" stroke-width="1.05"/>
<path d="M830.8,658.8 L830.8,678 L837.5,671.3 L843.3,671.3 Z" fill="#fff" stroke="#000" stroke-width="1.3" stroke-linejoin="miter"/>
<text x="682.80" y="237.70" font-size="12.5" fill="#1e1e1e" font-weight="normal" textLength="62.70" lengthAdjust="spacingAndGlyphs" >Harvey Ball</text>
<text x="781.50" y="237.70" font-size="12.5" fill="#1e1e1e" font-weight="normal" textLength="55.50" lengthAdjust="spacingAndGlyphs" >Checkbox</text>
<text x="886.00" y="237.70" font-size="12.5" fill="#1e1e1e" font-weight="normal" textLength="35.60" lengthAdjust="spacingAndGlyphs" >Image</text>
<text x="876.00" y="254.80" font-size="12.5" fill="#1e1e1e" font-weight="normal" textLength="54.40" lengthAdjust="spacingAndGlyphs" >from URL</text>
<text x="690.20" y="345.80" font-size="12.5" fill="#1e1e1e" font-weight="normal" textLength="44.60" lengthAdjust="spacingAndGlyphs" >Stacked</text>
<text x="679.70" y="363.00" font-size="12.5" fill="#1e1e1e" font-weight="normal" textLength="67.30" lengthAdjust="spacingAndGlyphs" >Column/Bar</text>
<text x="793.00" y="345.80" font-size="12.5" fill="#1e1e1e" font-weight="normal" textLength="31.40" lengthAdjust="spacingAndGlyphs" >100%</text>
<text x="775.30" y="363.00" font-size="12.5" fill="#1e1e1e" font-weight="normal" textLength="68.00" lengthAdjust="spacingAndGlyphs" >Column/Bar</text>
<text x="876.20" y="345.80" font-size="12.5" fill="#1e1e1e" font-weight="normal" textLength="54.40" lengthAdjust="spacingAndGlyphs" >Clustered</text>
<text x="869.70" y="363.00" font-size="12.5" fill="#1e1e1e" font-weight="normal" textLength="68.10" lengthAdjust="spacingAndGlyphs" >Column/Bar</text>
<text x="973.70" y="345.80" font-size="12.5" fill="#1e1e1e" font-weight="normal" textLength="51.00" lengthAdjust="spacingAndGlyphs" >Waterfall</text>
<text x="694.80" y="453.90" font-size="12.5" fill="#1e1e1e" font-weight="normal" textLength="37.80" lengthAdjust="spacingAndGlyphs" >Mekko</text>
<text x="690.20" y="470.80" font-size="12.5" fill="#1e1e1e" font-weight="normal" textLength="47.30" lengthAdjust="spacingAndGlyphs" >(% Axis)</text>
<text x="776.40" y="453.90" font-size="12.5" fill="#1e1e1e" font-weight="normal" textLength="64.20" lengthAdjust="spacingAndGlyphs" >Line/Profile</text>
<text x="866.00" y="453.90" font-size="12.5" fill="#1e1e1e" font-weight="normal" textLength="75.60" lengthAdjust="spacingAndGlyphs" >Stacked Area</text>
<text x="969.10" y="453.90" font-size="12.5" fill="#1e1e1e" font-weight="normal" textLength="63.20" lengthAdjust="spacingAndGlyphs" >100% Area</text>
<text x="693.30" y="560.90" font-size="12.5" fill="#1e1e1e" font-weight="normal" textLength="37.70" lengthAdjust="spacingAndGlyphs" >Mekko</text>
<text x="683.40" y="577.70" font-size="12.5" fill="#1e1e1e" font-weight="normal" textLength="59.00" lengthAdjust="spacingAndGlyphs" >(Unit Axis)</text>
<text x="799.80" y="560.90" font-size="12.5" fill="#1e1e1e" font-weight="normal" textLength="17.00" lengthAdjust="spacingAndGlyphs" >Pie</text>
<text x="876.20" y="560.90" font-size="12.5" fill="#1e1e1e" font-weight="normal" textLength="56.70" lengthAdjust="spacingAndGlyphs" >Doughnut</text>
<text x="977.50" y="560.90" font-size="12.5" fill="#1e1e1e" font-weight="normal" textLength="44.50" lengthAdjust="spacingAndGlyphs" >Scatter/</text>
<text x="980.50" y="577.70" font-size="12.5" fill="#1e1e1e" font-weight="normal" textLength="39.30" lengthAdjust="spacingAndGlyphs" >Bubble</text>
<text x="694.80" y="668.80" font-size="12.5" fill="#1e1e1e" font-weight="normal" textLength="37.00" lengthAdjust="spacingAndGlyphs" >Gantt/</text>
<text x="689.50" y="685.90" font-size="12.5" fill="#1e1e1e" font-weight="normal" textLength="48.00" lengthAdjust="spacingAndGlyphs" >Timeline</text>
<text x="793.00" y="668.80" font-size="12.5" fill="#1e1e1e" font-weight="normal" textLength="30.30" lengthAdjust="spacingAndGlyphs" >Table</text>
<text x="876.20" y="668.80" font-size="12.5" fill="#1e1e1e" font-weight="normal" textLength="57.80" lengthAdjust="spacingAndGlyphs" >Table with</text>
<text x="873.50" y="685.90" font-size="12.5" fill="#1e1e1e" font-weight="normal" textLength="62.40" lengthAdjust="spacingAndGlyphs" >Formatting</text>
<text x="976.70" y="668.80" font-size="12.5" fill="#1e1e1e" font-weight="normal" textLength="48.00" lengthAdjust="spacingAndGlyphs" >Table as</text>
<text x="984.30" y="685.90" font-size="12.5" fill="#1e1e1e" font-weight="normal" textLength="34.00" lengthAdjust="spacingAndGlyphs" >Image</text>
<text x="682.80" y="776.30" font-size="12.5" fill="#1e1e1e" font-weight="normal" textLength="60.90" lengthAdjust="spacingAndGlyphs" >To Existing</text>
<text x="690.50" y="793.50" font-size="12.5" fill="#1e1e1e" font-weight="normal" textLength="45.30" lengthAdjust="spacingAndGlyphs" >Element</text></svg></body></html>
